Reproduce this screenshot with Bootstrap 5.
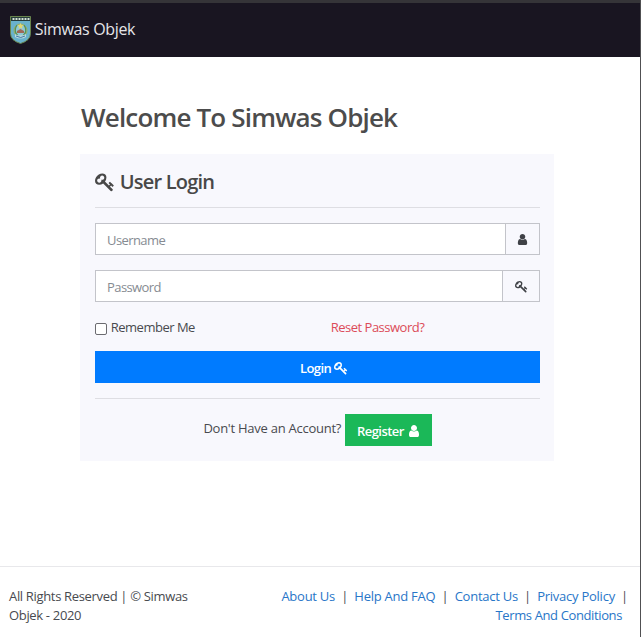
<!DOCTYPE html>
<html lang="en">
<head>
<meta charset="utf-8">
<meta name="viewport" content="width=device-width, initial-scale=1">
<title>Simwas Objek</title>
<link rel="stylesheet" href="https://cdn.jsdelivr.net/npm/bootstrap@5.3.0/dist/css/bootstrap.min.css">
<style>
html{font-size:15px}
body{font-family:"Open Sans","Noto Sans",sans-serif;font-size:13px;line-height:19px;letter-spacing:-.25px;color:#484a4f;background:#fff;height:637px;overflow:hidden;border-right:1px solid #505052}
.topbar{height:57px;background:#191521;border-top:3px solid #353438;padding:0 0 0 10px}
.topbar .navbar-brand{font-size:16px;line-height:24px;letter-spacing:-.33px;color:#e6e5e9}
.brand-name{padding-bottom:3px}
.wrap{width:474px;margin-left:80px}
.welcome{font-size:26px;line-height:32px;font-weight:600;letter-spacing:-.83px;color:#4c4c4c;margin:44px 0 21px 1px}
.login-panel{background:#f8f8fd;height:307px;padding:16px 14px 0 15px}
.panel-title{font-size:20px;line-height:24px;font-weight:600;letter-spacing:-.8px;color:#484848;height:24px;margin-bottom:13px}
.panel-title span{padding-left:1px}
.rule{height:1px;background:#dedee3}
.login-panel .form-control,.login-panel .input-group-text{height:32px;border:1px solid #c3c4ca;border-radius:0;font-size:13px;padding:2px 11px 0;letter-spacing:-.5px}
.login-panel .form-control::placeholder{color:#868b92}
.login-panel .input-group-text{background:#f8f8fd;color:#3f4146;padding:0 10px}
.login-panel .input-group-text.wide{padding:0 11.500px}
.ico{width:1em;height:1em;fill:currentColor;display:inline-block}
.act .ico{width:14px;height:14px;vertical-align:-2px}
.options{margin-top:16px;margin-bottom:14px;letter-spacing:-.5px}
.login-panel .form-control::placeholder{letter-spacing:-.58px}
.login-panel .form-check-input{width:12px;height:12px;margin:2px 0 0;border:1px solid #6b6b70;border-radius:2px}
.act{border-radius:0;border:0;height:32px;font-size:13px;font-weight:600;padding:2px 11px 0 12px;letter-spacing:-.55px;line-height:19px;color:#fff}
.act-login{background:#007bff;padding-left:24px}
.act-register{background:#1bb858}
.ask{padding-top:5px}
.reset{color:#dc4b59;margin-left:2px}
.foot{border-top:1px solid #e8e8eb;margin-top:105px;padding:20px 12px 0 9px}
.rights{letter-spacing:-.33px}
.foot-links a{color:#2876c8}
.link-line{gap:6.200px}
.terms{letter-spacing:-.38px;padding-right:6px}
</style>
</head>
<body class="d-flex flex-column">
<nav class="navbar topbar flex-shrink-0">
  <a class="navbar-brand d-flex align-items-center p-0 m-0" href="#">
    <svg width="21" height="28" viewBox="0 0 21 28" class="me-1">
      <path d="M.5.5h20v17q0 7-10 10Q.5 24.500.5 17.500Z" fill="#69b2cc" stroke="#68834c"/>
      <path d="M1 1h19v4H1Z" fill="#263c3b"/>
      <path d="M2.500 3h2m1 0h2m1 0h2m1 0h2m1 0h2m1 0h2" stroke="#d5e2d7" stroke-width="2"/>
      <circle cx="10.500" cy="14.500" r="6.500" fill="#8fc9d7" stroke="#9eaf58"/>
      <path d="M7 9q-4 6 1 11M14 9q4 6-1 11" fill="none" stroke="#579154" stroke-width="1.300"/>
      <path d="M10.500 7l1 2 2 .2-1.500 1.500.4 2-1.900-1-1.900 1 .4-2-1.500-1.500 2-.2Z" fill="#e1d773"/>
      <path d="M7 15l3.500-2 3.500 2v2H7Z" fill="#a06857"/>
      <path d="M5 18q5 3 11 0v3q-5 3-11 0Z" fill="#b9d9e0"/>
      <path d="M6 20q5 3 9 0" fill="none" stroke="#447ba5"/>
    </svg><span class="brand-name">Simwas Objek</span>
  </a>
</nav>

<svg class="d-none">
  <symbol id="key" viewBox="0 0 1792 1792"><path d="M832 512q0-80-56-136t-136-56-136 56-56 136q0 42 19 83-41-19-83-19-80 0-136 56t-56 136 56 136 136 56 136-56 56-136q0-42-19-83 41 19 83 19 80 0 136-56t56-136zm851 704q0 17-49 66t-66 49q-9 0-28.500-16t-36.500-33-38.500-40-24.500-26l-96 96 220 220q28 28 28 68 0 42-39 81t-81 39q-40 0-68-28l-671-671q-176 131-365 131-163 0-265.500-102.500t-102.500-265.500q0-160 95-313t248-248 313-95q163 0 265.500 102.500t102.500 265.500q0 189-131 365l355 355 96-96q-3-3-26-24.500t-40-38.500-33-36.500-16-28.500q0-17 49-66t66-49q13 0 23 10 6 6 46 44.500t82 79.500 86.500 86 73 78 28.500 41z"/></symbol>
  <symbol id="user" viewBox="0 0 1792 1792"><path d="M1536 1399q0 109-62.500 187t-150.500 78h-854q-88 0-150.500-78t-62.500-187q0-85 8.500-160.500t31.500-152 58.500-131 94-89 134.500-34.500q131 128 313 128t313-128q76 0 134.500 34.500t94 89 58.500 131 31.500 152 8.500 160.500zm-256-887q0 159-112.500 271.500t-271.500 112.500-271.500-112.500-112.500-271.500 112.500-271.500 271.500-112.500 271.500 112.500 112.500 271.500z"/></symbol>
</svg>

<main class="wrap flex-shrink-0">
  <h1 class="welcome">Welcome To Simwas Objek</h1>
  <form class="login-panel">
    <h2 class="panel-title d-flex align-items-center"><svg class="ico me-1"><use href="#key"/></svg><span>User Login</span></h2>
    <div class="rule"></div>
    <div class="input-group mt-3">
      <input class="form-control" type="text" placeholder="Username" aria-label="Username">
      <span class="input-group-text"><svg class="ico"><use href="#user"/></svg></span>
    </div>
    <div class="input-group mt-3">
      <input class="form-control" type="password" placeholder="Password" aria-label="Password">
      <span class="input-group-text wide"><svg class="ico"><use href="#key"/></svg></span>
    </div>
    <div class="row options">
      <div class="col-6 d-flex align-items-center">
        <input class="form-check-input" type="checkbox" id="remember"><label class="ms-1" for="remember">Remember Me</label>
      </div>
      <div class="col-6"><a class="reset text-decoration-none" href="#">Reset Password?</a></div>
    </div>
    <button type="button" class="btn act act-login w-100 d-block">Login <svg class="ico"><use href="#key"/></svg></button>
    <div class="rule mt-3"></div>
    <div class="d-flex justify-content-center mt-3 gap-1">
      <span class="ask">Don't Have an Account?</span>
      <button type="button" class="btn act act-register">Register <svg class="ico"><use href="#user"/></svg></button>
    </div>
  </form>
</main>

<footer class="foot d-flex justify-content-between flex-shrink-0">
  <div class="rights">All Rights Reserved | © Simwas<br>Objek - 2020</div>
  <div class="foot-links text-end">
    <div class="d-flex link-line"><a class="text-decoration-none" href="#">About Us</a><span>|</span><a class="text-decoration-none" href="#">Help And FAQ</a><span>|</span><a class="text-decoration-none" href="#">Contact Us</a><span>|</span><a class="text-decoration-none" href="#">Privacy Policy</a><span>|</span></div>
    <a class="terms text-decoration-none" href="#">Terms And Conditions</a>
  </div>
</footer>
<script src="https://cdn.jsdelivr.net/npm/bootstrap@5.3.0/dist/js/bootstrap.bundle.min.js"></script>
</body>
</html>
